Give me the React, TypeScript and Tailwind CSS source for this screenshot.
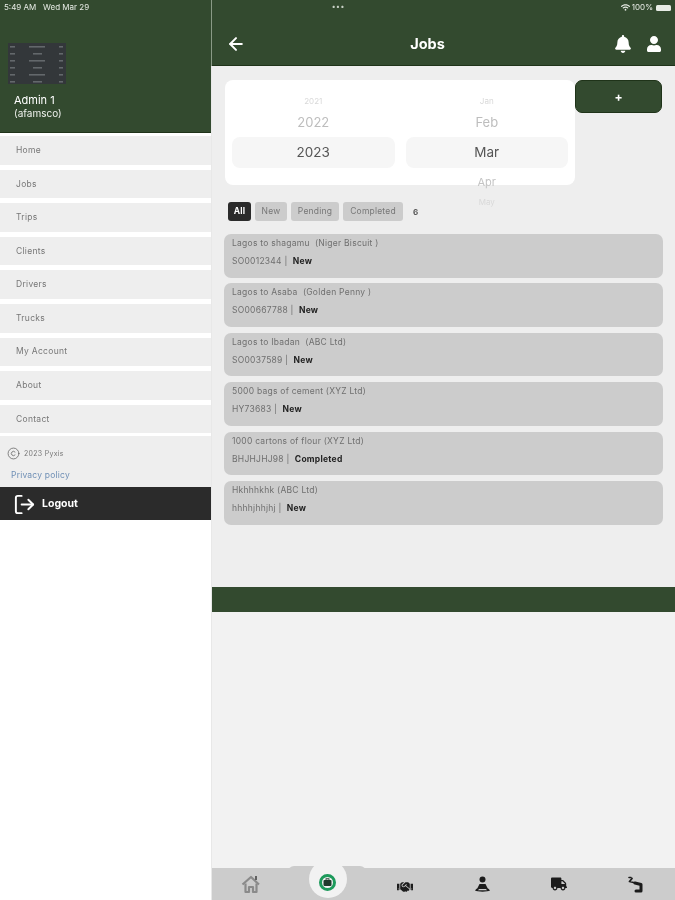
import React from "react";
import { ArrowLeft, Copyright, LogOut } from "lucide-react";
import { FaBell, FaHandshake, FaTruck, FaUser, FaWifi } from "react-icons/fa";

const menu = ["Home", "Jobs", "Trips", "Clients", "Drivers", "Trucks", "My Account", "About", "Contact"];

const jobs = [
    { title: "Lagos to shagamu  (Niger Biscuit )", code: "SO0012344", status: "New" },
    { title: "Lagos to Asaba  (Golden Penny )", code: "SO00667788", status: "New" },
    { title: "Lagos to Ibadan  (ABC Ltd)", code: "SO0037589", status: "New" },
    { title: "5000 bags of cement (XYZ Ltd)", code: "HY73683", status: "New" },
    { title: "1000 cartons of flour (XYZ Ltd)", code: "BHJHJHJ98", status: "Completed" },
    { title: "Hkhhhkhk (ABC Ltd)", code: "hhhhjhhjhj", status: "New" },
];

function Thumbnail() {
    const rows = [0, 1, 2, 3, 4, 5];
    return (
        <svg width="58" height="41" viewBox="0 0 58 41" className="mt-[43px] ml-[8px] block">
            <rect width="58" height="41" fill="#33373a" />
            {rows.map((r) => (
                <g key={r} fill="#63686b">
                    <rect x="2" y={3 + r * 7} width="5" height="1.6" />
                    <rect x={r % 2 ? 25 : 21} y={3 + r * 7} width={r % 2 ? 9 : 16} height="1.6" />
                    <rect x="51" y={3 + r * 7} width="4" height="1.6" />
                </g>
            ))}
        </svg>
    );
}

function Sidebar() {
    return (
        <aside className="w-[211px] h-full shrink-0 bg-white flex flex-col">
            <div className="h-[133px] shrink-0 bg-[#334a2f] border-b border-[#1f3319] relative">
                <div className="absolute left-[4px] top-[3px] text-[8px] leading-[9px] text-[#e8ece6]">
                    5:49 AM&nbsp;&nbsp; Wed Mar 29
                </div>
                <Thumbnail />
                <div className="ml-[14px] mt-[9px] text-[11px] leading-[14px] text-white">Admin 1</div>
                <div className="ml-[14px] text-[10px] leading-[13px] text-[#eef1ec]">(afamsco)</div>
            </div>
            <nav className="flex flex-col gap-[5px] pt-[3px]">
                {menu.map((item) => (
                    <div key={item} className="h-[28.6px] bg-[#eeeeee] pl-[16px] flex items-center text-[8.5px] tracking-[0.3px] text-[#777777]">
                        {item}
                    </div>
                ))}
            </nav>
            <div className="mt-[3px] h-[51px] shrink-0 bg-[#eeeeee] pl-[7px] pt-[11px]">
                <div className="flex items-center gap-[4px] text-[7px] tracking-[0.3px] text-[#777777]">
                    <Copyright size={13} strokeWidth={1.3} className="text-[#555555]" />
                    2023 Pyxis
                </div>
                <div className="mt-[9px] ml-[4px] text-[8.5px] tracking-[0.2px] text-[#6f8fb5]">Privacy policy</div>
            </div>
            <div className="h-[33px] shrink-0 bg-[#2b2b2b] flex items-center pl-[13px] pt-[1px] gap-[6px] text-white">
                <LogOut size={23} strokeWidth={2} />
                <span className="text-[10.5px] font-bold">Logout</span>
            </div>
        </aside>
    );
}

function PickerColumn({ top, near, selected, below, last }: { top: string; near: string; selected: string; below?: string; last?: string }) {
    return (
        <div className="flex-1 flex flex-col items-center">
            <div className="shrink-0 mt-[16px] h-[10px] leading-[10px] text-[8px] text-[#d9d9d9]">{top}</div>
            <div className="shrink-0 mt-[8px] h-[16px] leading-[16px] text-[13px] text-[#bdbdbd]">{near}</div>
            <div className="shrink-0 mt-[7px] h-[31px] w-full bg-[#f6f6f6] rounded-[8px] flex items-center justify-center text-[13.5px] text-[#555555]">
                {selected}
            </div>
            {below && <div className="shrink-0 mt-[7px] h-[14px] leading-[14px] text-[11px] text-[#c4c4c4]">{below}</div>}
            {last && <div className="shrink-0 mt-[8px] h-[10px] leading-[10px] text-[8px] text-[#d9d9d9]">{last}</div>}
        </div>
    );
}

function Picker() {
    return (
        <div className="w-[350px] h-[105px] bg-white rounded-[8px] flex gap-[11px] px-[7px]">
            <PickerColumn top="2021" near="2022" selected="2023" />
            <PickerColumn top="Jan" near="Feb" selected="Mar" below="Apr" last="May" />
        </div>
    );
}

function Filters() {
    return (
        <div className="flex items-center gap-[4px] ml-[16px] mt-[17px] h-[19px] text-[8.5px] tracking-[0.2px]">
            <div className="h-full w-[23px] rounded-[3px] bg-[#2b2b2b] text-white font-bold flex items-center justify-center">All</div>
            <div className="h-full w-[32px] rounded-[3px] bg-[#cccccc] text-[#777777] flex items-center justify-center">New</div>
            <div className="h-full w-[48px] rounded-[3px] bg-[#cccccc] text-[#777777] flex items-center justify-center">Pending</div>
            <div className="h-full w-[60px] rounded-[3px] bg-[#cccccc] text-[#777777] flex items-center justify-center">Completed</div>
            <div className="ml-[6px] text-[#555555] font-bold text-[8px]">6</div>
        </div>
    );
}

function JobCard({ title, code, status }: { title: string; code: string; status: string }) {
    return (
        <div className="h-[43.7px] shrink-0 bg-[#cccccc] rounded-[7px] pl-[8px] pt-[4px] text-[8.5px] tracking-[0.25px] text-[#6f6f6f]">
            <div className="h-[11px] leading-[11px] whitespace-pre">{title}</div>
            <div className="h-[11px] leading-[11px] mt-[7px] whitespace-pre">
                {code} |&nbsp; <span className="font-bold text-[#222222]">{status}</span>
            </div>
        </div>
    );
}

function HomeIcon() {
    return (
        <svg width="20" height="20" viewBox="0 0 20 20" fill="none" stroke="#8a8a8a" strokeWidth="2.2" strokeLinejoin="round">
            <path d="M1.5 10.5 10 3l8 7.5" />
            <path d="M4.5 9.5V18h3.5v-5h4v5h3.5V9.5" />
            <path d="M15 2v4" stroke="#555555" strokeWidth="1.8" />
        </svg>
    );
}

function BriefcaseBadge() {
    return (
        <svg width="17" height="17" viewBox="0 0 17 17">
            <circle cx="8.5" cy="8.5" r="7" fill="none" stroke="#1d9a5b" strokeWidth="3" />
            <rect x="4.5" y="6" width="8" height="6" rx="1" fill="#1f3a2c" />
            <rect x="7" y="4.7" width="3" height="1.5" fill="none" stroke="#1f3a2c" strokeWidth="0.8" />
        </svg>
    );
}

function DriverIcon() {
    return (
        <svg width="17" height="17" viewBox="0 0 17 17" fill="#1c1c1c">
            <circle cx="8.5" cy="3.5" r="3" />
            <path d="M5.5 8h6l2 4h-10z" />
            <path d="M1 14.5c1.5-2 2.5-2.5 3.5-2.5h8c1 0 2 .5 3.5 2.5-2 1.5-13 1.5-15 0zM4 14.3h9l-1-1.2H5z" fillRule="evenodd" />
        </svg>
    );
}

function RouteIcon() {
    return (
        <svg width="18" height="18" viewBox="0 0 18 18" fill="none" stroke="#1c1c1c" strokeLinecap="round" strokeLinejoin="round">
            <path d="M2 2.5h2" strokeWidth="1.6" />
            <path d="M5 3.5 2.5 6.5l6 1.5" strokeWidth="1.8" />
            <path d="M8 8l6 1.5v6.5H9" strokeWidth="3" />
        </svg>
    );
}

function TabBar() {
    return (
        <div className="relative h-[32px] shrink-0 bg-[#cccccc] grid grid-cols-6 items-center">
            <div className="absolute left-[76px] -top-[2px] w-[78px] h-[8px] rounded-t-[6px] bg-[#cccccc]" />
            <div className="absolute left-[97px] -top-[8px] w-[38px] h-[38px] rounded-full bg-[#f2f2f2]" />
            <div className="flex justify-center">
                <HomeIcon />
            </div>
            <div className="flex justify-center relative -mt-[4px]">
                <BriefcaseBadge />
            </div>
            <div className="flex justify-center mt-[6px]">
                <FaHandshake size={16} className="text-[#1c1c1c]" />
            </div>
            <div className="flex justify-center">
                <DriverIcon />
            </div>
            <div className="flex justify-center">
                <FaTruck size={16} className="text-[#1c1c1c]" />
            </div>
            <div className="flex justify-center">
                <RouteIcon />
            </div>
        </div>
    );
}

export default function App() {
    return (
        <div className="w-[675px] h-[900px] flex overflow-hidden bg-white blur-[0.35px] font-['Inter','Liberation_Sans',sans-serif]">
            <Sidebar />
            <div className="w-px shrink-0 flex flex-col">
                <div className="h-[66px] bg-[#8a9a86]" />
                <div className="flex-1 bg-[#e8e8e8]" />
            </div>
            <main className="flex-1 flex flex-col min-w-0">
                <header className="h-[66px] shrink-0 bg-[#334a2f] border-b border-[#1f3319] relative text-white">
                    <div className="absolute left-[120px] top-[3px] text-[7px] leading-[7px] tracking-[1px] font-bold text-[#c9d0c6]">•••</div>
                    <div className="absolute right-[4px] top-[3px] flex items-center gap-[2px] text-[8px] leading-[9px] text-[#e8ece6]">
                        <FaWifi size={9} />
                        <span>100%</span>
                        <div className="ml-[1px] w-[15px] h-[6px] rounded-[1.5px] bg-[#e8ece6]" />
                    </div>
                    <div className="h-full pt-[22px] pl-[14px] pr-[13px] flex items-center justify-between">
                        <ArrowLeft size={20} strokeWidth={2.4} />
                        <div className="absolute left-0 right-[32px] text-center text-[14.5px] font-bold pointer-events-none">Jobs</div>
                        <div className="flex items-center gap-[14px]">
                            <FaBell size={18} />
                            <FaUser size={16} />
                        </div>
                    </div>
                </header>
                <section className="h-[521px] shrink-0 bg-[#eeeeee] pt-[14px]">
                    <div className="flex items-start ml-[13px]">
                        <Picker />
                        <button className="w-[87px] h-[33px] bg-[#334a2f] border border-[#1f3319] rounded-[7px] text-white text-[12px] font-bold">+</button>
                    </div>
                    <Filters />
                    <div className="flex flex-col gap-[5.7px] mt-[13px] ml-[12px] mr-[12px]">
                        {jobs.map((job) => (
                            <JobCard key={job.code} {...job} />
                        ))}
                    </div>
                </section>
                <div className="h-[25px] shrink-0 bg-[#334a2f]" />
                <div className="flex-1 bg-[#f2f2f2]" />
                <TabBar />
            </main>
        </div>
    );
}
